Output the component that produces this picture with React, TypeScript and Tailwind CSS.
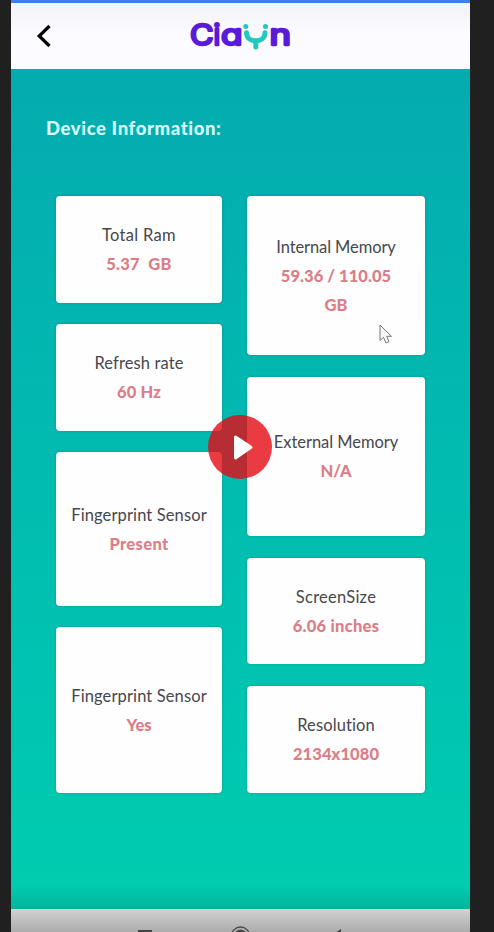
type Item = {
  label: string;
  value: string;
  height: string;
  labelTracking: string;
  valueTracking: string;
};

const leftColumn: Item[] = [
  { label: "Total Ram", value: "5.37\u00a0 GB", height: "h-[107px]", labelTracking: "tracking-[0.3px]", valueTracking: "tracking-[0.25px]" },
  { label: "Refresh rate", value: "60 Hz", height: "h-[107px]", labelTracking: "tracking-[0.12px]", valueTracking: "tracking-[0.1px]" },
  { label: "Fingerprint Sensor", value: "Present", height: "h-[154px]", labelTracking: "tracking-[0.12px]", valueTracking: "tracking-[0.35px]" },
  { label: "Fingerprint Sensor", value: "Yes", height: "h-[166px]", labelTracking: "tracking-[0.12px]", valueTracking: "tracking-[0px]" },
];

const rightColumn: Item[] = [
  { label: "Internal Memory", value: "59.36 / 110.05 GB", height: "h-[159px]", labelTracking: "tracking-[-0.1px]", valueTracking: "tracking-[0.05px]" },
  { label: "External Memory", value: "N/A", height: "h-[159px]", labelTracking: "tracking-[-0.05px]", valueTracking: "tracking-[0px]" },
  { label: "ScreenSize", value: "6.06 inches", height: "h-[106px]", labelTracking: "tracking-[0.25px]", valueTracking: "tracking-[0.25px]" },
  { label: "Resolution", value: "2134x1080", height: "h-[107px]", labelTracking: "tracking-[0.1px]", valueTracking: "tracking-[0.1px]" },
];

function Card({ item }: { item: Item }) {
  return (
    <div className={`flex shrink-0 flex-col items-center justify-center rounded-[4px] bg-[#fefefe] pt-px text-center text-[16.5px] leading-[29px] shadow-[0_0_3px_rgba(0,60,60,0.25)] ${item.height}`}>
      <p className={`whitespace-nowrap text-[#47474d] ${item.labelTracking}`}>{item.label}</p>
      <p className={`w-[122px] font-black text-[#dc7d88] ${item.valueTracking}`}>{item.value}</p>
    </div>
  );
}

function Logo() {
  return (
    <svg className="h-[36px] w-[110px]" viewBox="0 0 110 36" role="img" aria-label="Ciayn">
      <g
        fill="#5a1bd6"
        stroke="#5a1bd6"
        strokeWidth="2.4"
        strokeLinejoin="round"
        className="font-['Inter',sans-serif] text-[28px] font-normal"
        style={{ fontFeatureSettings: '"cv11" 1' }}
      >
        <text x="5" y="26.800" textLength="23.500" lengthAdjust="spacingAndGlyphs">C</text>
        <text x="28.600" y="26.800">i</text>
        <text x="36" y="26.800" textLength="21.500" lengthAdjust="spacingAndGlyphs">a</text>
        <text x="84.500" y="26.800" textLength="21.500" lengthAdjust="spacingAndGlyphs">n</text>
      </g>
      <g fill="none" stroke="#1fc9bd" strokeWidth="5" strokeLinecap="round">
        <path d="M61.500 14.800C61.500 25.500 80 25.500 80 14.800M70.800 23.500V29" />
      </g>
      <circle cx="60.800" cy="8.500" r="2.500" fill="#1fc9bd" />
      <circle cx="80.500" cy="8.500" r="2.500" fill="#1fc9bd" />
    </svg>
  );
}

export default function App() {
  return (
    <div className="relative h-[932px] w-[494px] overflow-hidden bg-[#202020] font-['Lato',sans-serif]">
      <div className="ml-[11px] flex h-full w-[458.5px] flex-col">
        <div className="h-[3px] shrink-0 bg-[#3f7fea]" />
        <header className="grid h-[66px] shrink-0 grid-cols-[1fr_110px_1fr] items-center bg-linear-to-b from-[#f3f3f8] to-[#fcfbff] to-50%">
          <svg className="ml-[25px] h-[24px] w-[16px]" viewBox="0 0 16 24" fill="none" stroke="#060606" strokeWidth="3.2">
            <path d="M13.5 2L3.2 12L13.5 22" />
          </svg>
          <Logo />
        </header>
        <main className="flex h-[839.5px] shrink-0 flex-col bg-linear-to-b from-[#04abb0] to-[#00cdb0]">
          <h1 className="ml-[35px] mt-[47px] h-6 whitespace-nowrap text-[18.5px] leading-6 font-black tracking-[0.6px] text-[#d8ffff]">Device Information:</h1>
          <div className="mt-[56px] ml-[45px] flex items-start gap-[25px]">
            <div className="flex w-[166px] flex-col gap-[21px]">
              {leftColumn.map((item, i) => (
                <Card key={i} item={item} />
              ))}
            </div>
            <div className="flex w-[178px] flex-col gap-[22px]">
              {rightColumn.map((item, i) => (
                <Card key={i} item={item} />
              ))}
            </div>
          </div>
          <div className="mt-auto h-[24px] bg-linear-to-b from-transparent to-black/12" />
        </main>
        <footer className="flex h-[24px] shrink-0 bg-linear-to-b from-[#d2d2d2] to-[#aaaaaa]">
          <svg className="h-[24px] w-[458px]" viewBox="0 0 458 24">
            <rect x="127" y="21" width="14" height="12" fill="#444" />
            <circle cx="229.500" cy="27" r="9" fill="none" stroke="#484848" strokeWidth="1.300" />
            <circle cx="229.500" cy="27" r="6.500" fill="#484848" />
            <path d="M330 20V36L318 28Z" fill="#444" />
          </svg>
        </footer>
      </div>

      {/* Pointer */}
      <svg className="absolute top-[324px] left-[379px] h-[21px] w-[14px]" viewBox="0 0 14 21">
        <path d="M1 1V16.500L4.500 13.400L7 19L10 17.700L7.700 12.300H12.500Z" fill="#f8f8f8" stroke="#77777b" strokeWidth="1" />
      </svg>

      {/* Play button */}
      <button aria-label="Play" className="absolute top-[415px] left-[208px] flex size-[64px] items-center justify-center rounded-full bg-[#e50a14]/80">
        <svg className="size-[64px]" viewBox="0 0 64 64">
          <path d="M27.500 22L43 32.200L27.500 43Z" fill="#fff" stroke="#fff" strokeWidth="3" strokeLinejoin="round" />
        </svg>
      </button>
    </div>
  );
}
